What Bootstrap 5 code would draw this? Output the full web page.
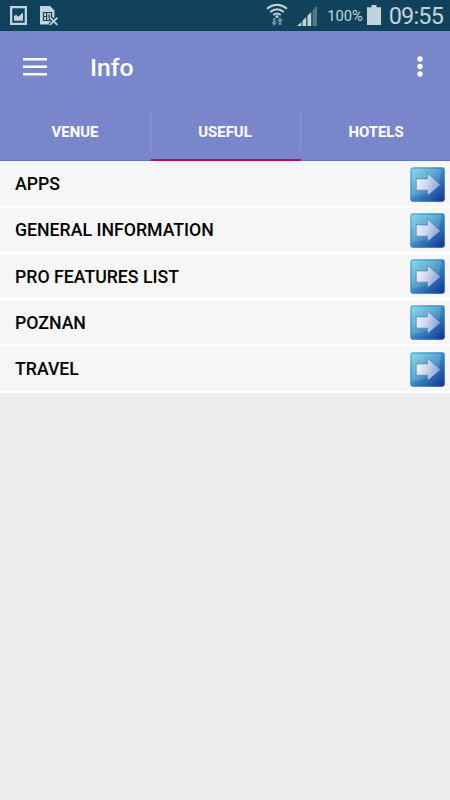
<!DOCTYPE html>
<html lang="en">
<head>
<meta charset="utf-8">
<meta name="viewport" content="width=device-width, initial-scale=1">
<title>Info</title>
<link href="https://cdn.jsdelivr.net/npm/bootstrap@5.3.0/dist/css/bootstrap.min.css" rel="stylesheet">
<style>
body{font-family:Roboto,"Liberation Sans",sans-serif;background:#eee;height:800px;overflow:hidden}
svg{display:block;flex:none}
.status-bar{height:31px;background:#10435b;color:#c3d3da;padding-left:10px;padding-right:7px}
.status-bar svg{fill:#c3d3da}
.sim-icon{margin-left:13px}
.signal-icon{margin-left:9px}
.battery-icon{margin-left:4px}
.battery-text{font-size:14.7px;line-height:31px;padding-top:2px;margin-left:10px}
.clock{font-size:23.4px;letter-spacing:-.8px;line-height:31px;padding-top:2px;margin-left:8px}
.app-header{background:#7986cb;height:130px;border-bottom:1px solid #6674c8}
.toolbar{height:72px;padding:0 24px 0 23px}
.page-title{font-size:24.8px;font-weight:500;line-height:30px;margin:2px 0 0 43px}
.tab-row{height:58px}
.tab-row .nav-link{color:#fff;font-size:14.9px;font-weight:700;line-height:40px;padding:9px 0 0;height:58px;border-radius:0;position:relative}
.tab-row .nav-item+.nav-item .nav-link::before{content:"";position:absolute;left:0;top:8px;width:1px;height:40px;background:#8d98d3}
.tab-row .nav-link.active{border-bottom:2px solid #c2064f;margin-left:1px;padding-right:2px}
.tab-row .nav-item .nav-link.active::before{left:-1px}
.tab-row .nav-item:last-child .nav-link{padding-left:2px}
.info-list{padding-top:.7px;background:#f6f6f6}
.info-list .list-group-item{height:46.2px;background:#f6f6f6;border:0;border-bottom:2px solid #fff!important;color:#000;font-size:17.7px;font-weight:500;line-height:24px;padding:1px 5px 0 15px}
</style>
<script src="https://cdn.jsdelivr.net/npm/bootstrap@5.3.0/dist/js/bootstrap.bundle.min.js"></script>
</head>
<body>
<svg width="0" height="0" class="position-absolute" aria-hidden="true">
<defs>
<linearGradient id="tile" x1="0" y1="0" x2="1" y2="1"><stop offset="0" stop-color="#6fcfe3"/><stop offset=".45" stop-color="#3f95c8"/><stop offset="1" stop-color="#0e2c92"/></linearGradient>
<linearGradient id="gloss" x1="0" y1="0" x2=".8" y2="1"><stop offset="0" stop-color="#fff" stop-opacity=".22"/><stop offset="1" stop-color="#fff" stop-opacity=".08"/></linearGradient>
<linearGradient id="arrow" x1="0" y1="0" x2="1" y2=".3"><stop offset="0" stop-color="#f4f9fd"/><stop offset=".5" stop-color="#d0d9f0"/><stop offset="1" stop-color="#8fa3da"/></linearGradient>
<symbol id="go" viewBox="0 0 36 36">
<rect x=".3" y=".3" width="35.4" height="35.4" rx="2.5" fill="url(#tile)"/>
<path d="M2 2H32Q31 22 20 26Q12 29 2 30Z" fill="url(#gloss)"/>
<rect x="1" y="1" width="34" height="34" rx="2" fill="none" stroke="#287fae" stroke-opacity=".35"/>
<path d="M6.5 12.3H18V6.5L31.5 18.2L18 29.5V23.8H6.5Z" fill="url(#arrow)" stroke="#31669f" stroke-opacity=".55" stroke-width=".9"/>
</symbol>
</defs>
</svg>
<div class="status-bar d-flex align-items-center">
<svg width="17" height="31" viewBox="0 0 17 31"><path fill-rule="evenodd" d="M0 6H17V25H0ZM2.3 8.3V22.7H14.7V8.3Z"/><path d="M4 20.8V16L6.2 14.7L8.3 16.7L13 12.4V20.8Z"/></svg>
<svg class="sim-icon" width="19" height="31" viewBox="0 0 19 31"><path d="M0 6H10L14.5 10.5V18L9 24.5H0Z"/><path d="M3.3 12.5H12M3.3 20.5H10M3.5 12V21M6.6 12V20.5M3.5 16.5H6M9 14.5V18M11.5 12V18" fill="none" stroke="#10435b" stroke-width="1.2"/><path d="M10 17.5L17.5 25M17.5 17.5L10 25" stroke="#10435b" stroke-width="4"/><path d="M10 17.7L17.4 24.8M17.4 17.7L10 24.8" stroke="#c3d3da" stroke-width="1.8"/></svg>
<svg class="ms-auto" width="22" height="31" viewBox="0 0 22 31"><g fill="none" stroke="#c3d3da" stroke-width="2"><path d="M1 8.7Q11 .8 21 8.7M4.2 12Q11 6.4 17.8 12M7.3 15Q11 12 14.7 15"/></g><circle cx="11" cy="16.6" r="1.5"/><path d="M7 18H9.5V22H11L8 26L5.2 22H7ZM12.7 25V21H11L14 17L17 21H15.3V25Z" fill="#6d8e9d"/></svg>
<svg class="signal-icon" width="20" height="31" viewBox="0 0 20 31"><path d="M0 26L4.4 21.9V26ZM5.5 20.8L9.2 17V26H5.5ZM10.5 15.8L14.2 12V26H10.5Z"/><path d="M15.6 10.4L20 5.7V26H15.6Z" fill="#527888"/></svg>
<span class="battery-text">100%</span>
<svg class="battery-icon" width="14" height="31" viewBox="0 0 14 31"><path d="M4.5 5H9.5V7.3H14V25H0V7.3H4.5Z"/></svg>
<span class="clock">09:55</span>
</div>
<header class="app-header text-white">
<div class="toolbar d-flex align-items-center">
<svg width="24" height="18" viewBox="0 0 24 18"><path d="M0 1.3H24M0 8.8H24M0 16.2H24" stroke="#fff" stroke-width="2.5"/></svg>
<h1 class="page-title">Info</h1>
<svg class="ms-auto" width="12" height="22" viewBox="0 0 12 22" fill="#fff"><circle cx="6" cy="3" r="2.7"/><circle cx="6" cy="10.5" r="2.7"/><circle cx="6" cy="18" r="2.7"/></svg>
</div>
<ul class="nav nav-fill tab-row row g-0">
<li class="nav-item col-4"><a class="nav-link" href="#">VENUE</a></li>
<li class="nav-item col-4"><a class="nav-link active" href="#">USEFUL</a></li>
<li class="nav-item col-4"><a class="nav-link" href="#">HOTELS</a></li>
</ul>
</header>
<main>
<div class="list-group list-group-flush rounded-0 info-list">
<a href="#" class="list-group-item d-flex align-items-center justify-content-between"><span>APPS</span><svg width="35" height="35"><use href="#go"/></svg></a>
<a href="#" class="list-group-item d-flex align-items-center justify-content-between"><span>GENERAL INFORMATION</span><svg width="35" height="35"><use href="#go"/></svg></a>
<a href="#" class="list-group-item d-flex align-items-center justify-content-between"><span>PRO FEATURES LIST</span><svg width="35" height="35"><use href="#go"/></svg></a>
<a href="#" class="list-group-item d-flex align-items-center justify-content-between"><span>POZNAN</span><svg width="35" height="35"><use href="#go"/></svg></a>
<a href="#" class="list-group-item d-flex align-items-center justify-content-between"><span>TRAVEL</span><svg width="35" height="35"><use href="#go"/></svg></a>
</div>
</main>
</body>
</html>
